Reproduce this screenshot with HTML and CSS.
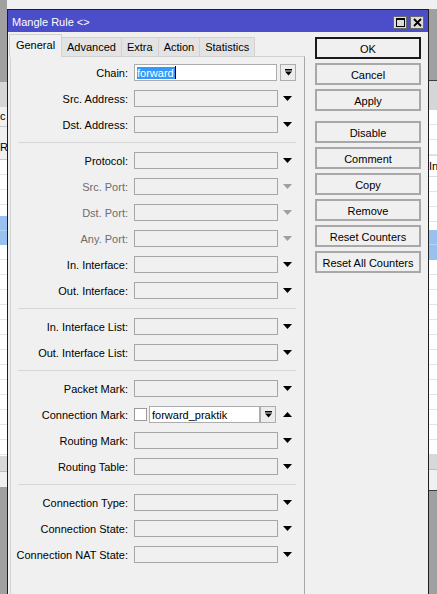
FILE: index.html
```html
<!DOCTYPE html>
<html>
<head>
<meta charset="utf-8">
<title>Mangle Rule</title>
<link rel="stylesheet" href="styles.css">
</head>
<body>
<div class="desk">
  <div class="bg-left">
    <div class="bg-gray top"></div>
    <div class="bg-tool"></div>
    <div class="bg-bar"><span class="frag">c</span></div>
    <div class="bg-bar2"><span class="frag">R</span></div>
    <div class="bg-list l1"></div>
    <div class="bg-sel"></div>
    <div class="bg-list l2"></div>
    <div class="bg-status"></div>
    <div class="bg-light"></div>
    <div class="bg-gray fill"></div>
  </div>
  <div class="topstrip"></div>
  <div class="bg-right">
    <div class="bg-gray rtop"></div>
    <div class="bg-line"></div>
    <div class="bg-tool r"></div>
    <div class="bg-list r1"></div>
    <div class="bg-head"><span class="frag">In</span></div>
    <div class="bg-list r2"></div>
    <div class="bg-sel r"></div>
    <div class="bg-list r3"></div>
    <div class="bg-status"></div>
    <div class="bg-light r"></div>
    <div class="bg-line"></div>
    <div class="bg-gray fill"></div>
  </div>

  <div class="win">
    <div class="titlebar">
      <span class="title">Mangle Rule &lt;&gt;</span>
      <div class="tb-btns">
        <span class="tb-btn"><svg width="9" height="9" viewBox="0 0 9 9"><rect x="0.5" y="0.5" width="8" height="8" fill="none" stroke="#000"/><rect x="0" y="0" width="9" height="2" fill="#000"/></svg></span>
        <span class="tb-btn"><svg width="9" height="9" viewBox="0 0 9 9"><path d="M1 1L8 8M8 1L1 8" stroke="#000" stroke-width="1.8"/></svg></span>
      </div>
    </div>
    <div class="wbody">
      <div class="tabarea">
        <div class="tabs">
          <span class="tab active">General</span>
          <span class="tab">Advanced</span>
          <span class="tab">Extra</span>
          <span class="tab">Action</span>
          <span class="tab">Statistics</span>
        </div>
        <div class="panel">
          <div class="group">
            <div class="row">
              <span class="lbl">Chain:</span>
              <div class="field chain">
                <div class="input white"><span class="sel">forward</span><span class="caret"></span></div>
                <span class="ddbtn"><svg width="7" height="7" viewBox="0 0 7 7"><rect x="0" y="0" width="7" height="1.5" fill="#000"/><polygon points="0,2.5 7,2.5 3.5,6.5" fill="#000"/></svg></span>
              </div>
            </div>
            <div class="row"><span class="lbl">Src. Address:</span><div class="box"></div><span class="arrow"><svg width="9" height="5" viewBox="0 0 9 5"><polygon points="0,0 9,0 4.5,5"/></svg></span></div>
            <div class="row"><span class="lbl">Dst. Address:</span><div class="box"></div><span class="arrow"><svg width="9" height="5" viewBox="0 0 9 5"><polygon points="0,0 9,0 4.5,5"/></svg></span></div>
          </div>
          <div class="sep"></div>
          <div class="group">
            <div class="row"><span class="lbl">Protocol:</span><div class="box"></div><span class="arrow"><svg width="9" height="5" viewBox="0 0 9 5"><polygon points="0,0 9,0 4.5,5"/></svg></span></div>
            <div class="row dis"><span class="lbl">Src. Port:</span><div class="box"></div><span class="arrow"><svg width="9" height="5" viewBox="0 0 9 5"><polygon points="0,0 9,0 4.5,5"/></svg></span></div>
            <div class="row dis"><span class="lbl">Dst. Port:</span><div class="box"></div><span class="arrow"><svg width="9" height="5" viewBox="0 0 9 5"><polygon points="0,0 9,0 4.5,5"/></svg></span></div>
            <div class="row dis"><span class="lbl">Any. Port:</span><div class="box"></div><span class="arrow"><svg width="9" height="5" viewBox="0 0 9 5"><polygon points="0,0 9,0 4.5,5"/></svg></span></div>
            <div class="row"><span class="lbl">In. Interface:</span><div class="box"></div><span class="arrow"><svg width="9" height="5" viewBox="0 0 9 5"><polygon points="0,0 9,0 4.5,5"/></svg></span></div>
            <div class="row"><span class="lbl">Out. Interface:</span><div class="box"></div><span class="arrow"><svg width="9" height="5" viewBox="0 0 9 5"><polygon points="0,0 9,0 4.5,5"/></svg></span></div>
          </div>
          <div class="sep"></div>
          <div class="group">
            <div class="row"><span class="lbl">In. Interface List:</span><div class="box"></div><span class="arrow"><svg width="9" height="5" viewBox="0 0 9 5"><polygon points="0,0 9,0 4.5,5"/></svg></span></div>
            <div class="row"><span class="lbl">Out. Interface List:</span><div class="box"></div><span class="arrow"><svg width="9" height="5" viewBox="0 0 9 5"><polygon points="0,0 9,0 4.5,5"/></svg></span></div>
          </div>
          <div class="sep"></div>
          <div class="group">
            <div class="row"><span class="lbl">Packet Mark:</span><div class="box"></div><span class="arrow"><svg width="9" height="5" viewBox="0 0 9 5"><polygon points="0,0 9,0 4.5,5"/></svg></span></div>
            <div class="row">
              <span class="lbl">Connection Mark:</span>
              <div class="field cmark">
                <span class="cb"></span>
                <div class="input white small"><span class="val">forward_praktik</span></div>
                <span class="ddbtn"><svg width="7" height="7" viewBox="0 0 7 7"><rect x="0" y="0" width="7" height="1.5" fill="#000"/><polygon points="0,2.5 7,2.5 3.5,6.5" fill="#000"/></svg></span>
              </div>
              <span class="arrow"><svg width="9" height="5" viewBox="0 0 9 5"><polygon points="0,5 9,5 4.5,0"/></svg></span>
            </div>
            <div class="row"><span class="lbl">Routing Mark:</span><div class="box"></div><span class="arrow"><svg width="9" height="5" viewBox="0 0 9 5"><polygon points="0,0 9,0 4.5,5"/></svg></span></div>
            <div class="row"><span class="lbl">Routing Table:</span><div class="box"></div><span class="arrow"><svg width="9" height="5" viewBox="0 0 9 5"><polygon points="0,0 9,0 4.5,5"/></svg></span></div>
          </div>
          <div class="sep"></div>
          <div class="group">
            <div class="row"><span class="lbl">Connection Type:</span><div class="box"></div><span class="arrow"><svg width="9" height="5" viewBox="0 0 9 5"><polygon points="0,0 9,0 4.5,5"/></svg></span></div>
            <div class="row"><span class="lbl">Connection State:</span><div class="box"></div><span class="arrow"><svg width="9" height="5" viewBox="0 0 9 5"><polygon points="0,0 9,0 4.5,5"/></svg></span></div>
            <div class="row"><span class="lbl">Connection NAT State:</span><div class="box"></div><span class="arrow"><svg width="9" height="5" viewBox="0 0 9 5"><polygon points="0,0 9,0 4.5,5"/></svg></span></div>
          </div>
        </div>
      </div>
      <div class="btns">
        <div class="btn default">OK</div>
        <div class="btn">Cancel</div>
        <div class="btn">Apply</div>
        <div class="btn gap">Disable</div>
        <div class="btn">Comment</div>
        <div class="btn">Copy</div>
        <div class="btn">Remove</div>
        <div class="btn">Reset Counters</div>
        <div class="btn">Reset All Counters</div>
      </div>
    </div>
  </div>
</div>
</body>
</html>
```

FILE: styles.css
```css
* { box-sizing: border-box; margin: 0; padding: 0; }
html, body { width: 437px; height: 594px; overflow: hidden; }
body {
  background: #a0a0a0;
  font-family: "Liberation Sans", Arial, sans-serif;
  font-size: 11px;
  color: #000;
}
.desk { position: relative; width: 437px; height: 594px; overflow: hidden; }

/* ---------- background windows ---------- */
.bg-left, .bg-right {
  position: absolute; top: 0; width: 8px; height: 594px;
  display: flex; flex-direction: column; overflow: hidden;
}
.bg-left { left: 0; width: 7px; }
.bg-right { left: 429px; top: 9px; height: 585px; }
.topstrip { position: absolute; left: 7px; top: 0; width: 430px; height: 9px; background: #f0f0f0; }
.bg-gray { background: #a0a0a0; }
.bg-gray.top { height: 82px; flex: none; }
.bg-gray.rtop { height: 71px; flex: none; }
.bg-gray.fill { flex: 1; }
.bg-line { height: 1px; background: #3c3c3c; flex: none; }
.bg-tool { height: 25px; background: #d6d6d6; flex: none; }
.bg-tool.r { height: 29px; }
.bg-bar { height: 20px; background: #f0f0f0; border-bottom: 1px solid #c8c8c8; flex: none; line-height: 18px; }
.bg-bar2 { height: 33px; background: #f0f0f0; border-bottom: 1px solid #c8c8c8; flex: none; padding-top: 11px; line-height: 18px; }
.frag { display: block; white-space: nowrap; font-size: 11px; }
.bg-list {
  background: repeating-linear-gradient(to bottom, #fff 0 14px, #e4e4e4 14px 15px);
  flex: none;
}
.bg-list.l1 { height: 56px; }
.bg-list.l2 { height: 211px; }
.bg-list.r1 { height: 45px; }
.bg-list.r2 { height: 53px; }
.bg-list.r3 { height: 194px; }
.bg-head { height: 22px; background: #fff; border-top: 1px solid #dcdcdc; border-bottom: 1px solid #dcdcdc; line-height: 20px; flex: none; }
.bg-sel { height: 29px; flex: none; background: linear-gradient(to bottom, #99c1ef 0 14px, #b6d2f3 14px 15px, #99c1ef 15px); }
.bg-sel.r { height: 30px; }
.bg-status { height: 16px; background: #d8d8d8; border-bottom: 1px solid #bdbdbd; flex: none; }
.bg-light { height: 15px; background: #f0f0f0; flex: none; }
.bg-light.r { height: 20px; }

/* ---------- main window ---------- */
.win {
  position: absolute; left: 7px; top: 9px;
  width: 422px; height: 600px;
  border: 1px solid #1e1e1e; border-bottom: none;
  background: #f0f0f0;
  display: flex; flex-direction: column;
}
.titlebar {
  height: 22px; flex: none;
  background: #4b4ec8;
  display: flex; align-items: center;
  padding: 0 4px 0 4px;
}
.title { color: #fff; font-size: 11px; white-space: nowrap; padding-top: 1px; }
.tb-btns { margin-left: auto; display: flex; gap: 3px; padding-top: 2px; }
.tb-btn {
  width: 14px; height: 13px;
  background: #dcdcdc;
  border: 1px solid #6a6a6a;
  display: flex; align-items: center; justify-content: center;
}
.tb-btn svg { display: block; }

.wbody { flex: 1; display: flex; padding-top: 2px; }
.tabarea { margin-left: 1px; width: 296px; display: flex; flex-direction: column; }
.tabs { height: 22px; display: flex; align-items: flex-end; flex: none; }
.tab {
  height: 19px;
  padding: 0 5px;
  background: #e3e3e3;
  border: 1px solid #d2d2d2;
  border-bottom: none;
  margin-right: -1px;
  display: flex; align-items: center; justify-content: center;
  white-space: nowrap;
}
.tab.active {
  height: 23px;
  padding: 0 6px 3px 6px;
  background: #f0f0f0;
  margin-bottom: -1px;
  position: relative; z-index: 1;
  width: 53px;
}
.panel {
  margin-left: 1px;
  width: 295px;
  flex: 1;
  border: 1px solid #d2d2d2;
  border-right-color: #a8a8a8;
  border-bottom: none;
  padding-top: 7px;
  display: flex; flex-direction: column;
}
.group { display: flex; flex-direction: column; gap: 9px; }
.sep { height: 1px; width: 278px; margin: 9px 0 9px 7px; background: #d6d6d6; }
.row { display: flex; align-items: center; height: 17px; }
.lbl {
  width: 117px; margin-right: 6px;
  text-align: right; white-space: nowrap;
  line-height: 17px;
  padding-top: 1px;
}
.row.dis .lbl { color: #6d6d6d; }
.box { width: 144px; height: 17px; border: 1px solid #a6a6a6; background: #f0f0f0; }
.arrow { width: 19px; display: flex; justify-content: center; align-items: center; }
.arrow svg { display: block; fill: #000; }
.row.dis .arrow svg { fill: #a0a0a0; }

.field { display: flex; align-items: center; height: 17px; }
.field.chain { width: 162px; }
.field.chain .input { width: 143px; margin-right: 3px; }
.field.cmark { width: 144px; }
.input { height: 17px; border: 1px solid #acacac; display: flex; align-items: center; padding-left: 2px; }
.input.white { background: #fff; }
.input.small { width: 111px; margin-right: 0; margin-left: 2px; }
.sel { background: #3399ff; color: #fff; line-height: 12px; height: 12px; padding: 0 1px 0 0; }
.caret { width: 1px; height: 13px; background: #000; }
.val { line-height: 15px; padding-top: 1px; }
.ddbtn {
  width: 16px; height: 17px;
  border: 1px solid #adadad;
  background: #ececec;
  display: flex; align-items: center; justify-content: center;
}
.ddbtn svg { display: block; }
.cb { width: 13px; height: 13px; border: 1px solid #9a9a9a; background: #fff; flex: none; }

/* ---------- buttons ---------- */
.btns {
  margin-left: 10px; margin-top: 3px;
  width: 106px;
  display: flex; flex-direction: column; gap: 4px;
}
.btn {
  height: 22px;
  border: 2px solid #a8a8a8;
  background: #f0f0f0;
  display: flex; align-items: center; justify-content: center;
  white-space: nowrap;
  padding-top: 1px;
}
.btn.default { border-color: #1a1a1a; }
.btn.gap { margin-top: 6px; }
```
